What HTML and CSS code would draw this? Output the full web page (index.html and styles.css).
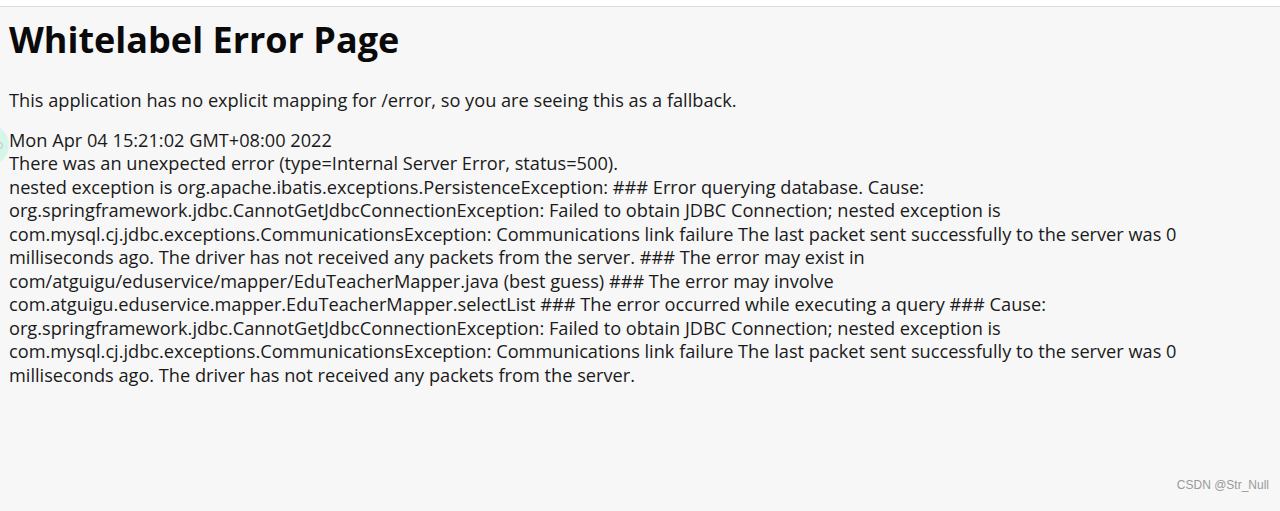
FILE: index.html
```html
<!DOCTYPE html>
<html lang="en">
<head>
    <meta charset="UTF-8">
    <title>Error</title>
    <link rel="stylesheet" href="styles.css">
</head>
<body>
    <div class="topbar"></div>
    <div class="page">
        <span class="bubble"></span>
        <h1>Whitelabel Error Page</h1>
        <p class="intro">This application has no explicit mapping for /error, so you are seeing this as a fallback.</p>
        <div id="created">Mon Apr 04 15:21:02 GMT+08:00 2022</div>
        <div>There was an unexpected error (type=Internal Server Error, status=500).</div>
        <div class="trace">
            <span>nested exception is org.apache.ibatis.exceptions.PersistenceException: ### Error querying database. Cause:</span>
            <span>org.springframework.jdbc.CannotGetJdbcConnectionException: Failed to obtain JDBC Connection; nested exception is</span>
            <span>com.mysql.cj.jdbc.exceptions.CommunicationsException: Communications link failure The last packet sent successfully to the server was 0</span>
            <span>milliseconds ago. The driver has not received any packets from the server. ### The error may exist in</span>
            <span>com/atguigu/eduservice/mapper/EduTeacherMapper.java (best guess) ### The error may involve</span>
            <span>com.atguigu.eduservice.mapper.EduTeacherMapper.selectList ### The error occurred while executing a query ### Cause:</span>
            <span>org.springframework.jdbc.CannotGetJdbcConnectionException: Failed to obtain JDBC Connection; nested exception is</span>
            <span>com.mysql.cj.jdbc.exceptions.CommunicationsException: Communications link failure The last packet sent successfully to the server was 0</span>
            <span>milliseconds ago. The driver has not received any packets from the server.</span>
        </div>
    </div>
    <div class="mark">CSDN @Str_Null</div>
</body>
</html>
```

FILE: styles.css
```css
html, body {
    margin: 0;
    height: 100%;
}

body {
    background-color: #f7f7f7;
    color: #1a1a1a;
    font-family: "Open Sans", "Noto Sans", sans-serif;
    font-size: 18.2px;
    line-height: 23.5px;
    overflow: hidden;
    position: relative;
}

.topbar {
    height: 6px;
    background-color: #ffffff;
    border-bottom: 1px solid #dedede;
}

.page {
    padding: 0 9px;
    position: relative;
}

h1 {
    margin: 0;
    padding-top: 13px;
    font-size: 36px;
    line-height: 40px;
    font-weight: 700;
    color: #0a0a0a;
}

.intro {
    margin: 0;
    padding-top: 29px;
    padding-bottom: 16px;
}

.trace span {
    display: block;
    white-space: nowrap;
}

.bubble {
    position: absolute;
    left: -33px;
    top: 117px;
    width: 42px;
    height: 42px;
    border-radius: 50%;
    background-color: #d6f6e9;
}

.bubble::after {
    content: "";
    position: absolute;
    right: 6px;
    top: 18px;
    width: 5px;
    height: 5px;
    border: 1px solid #b9c4bf;
    border-radius: 50%;
}

.mark {
    position: absolute;
    right: 11px;
    bottom: 14px;
    font-family: "Liberation Sans", Arial, sans-serif;
    font-size: 12px;
    color: #9a9a9a;
}
```
